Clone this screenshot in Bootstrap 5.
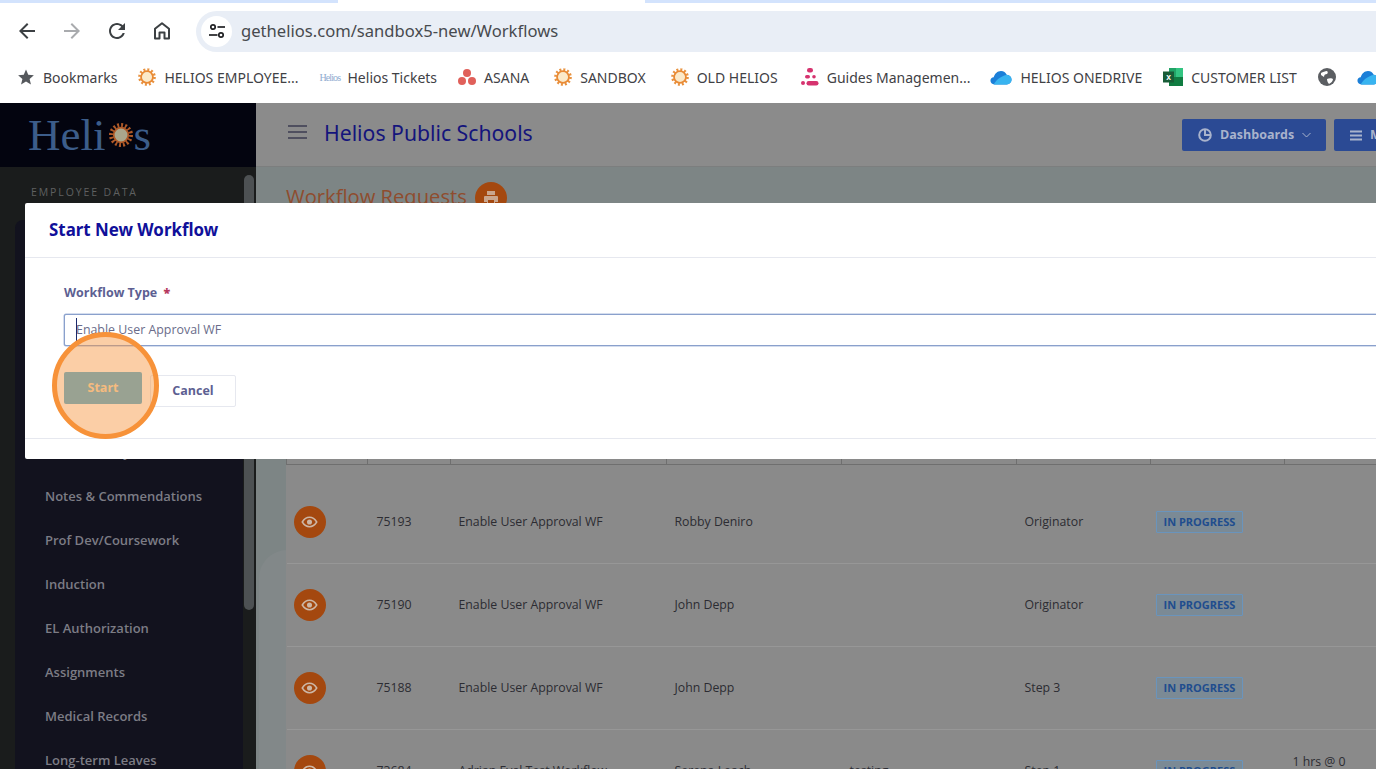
<!DOCTYPE html>
<html lang="en">
<head>
<meta charset="utf-8">
<title>Helios Workflows</title>
<link rel="stylesheet" href="https://cdn.jsdelivr.net/npm/bootstrap@5.3.0/dist/css/bootstrap.min.css">
<style>
html,body{height:769px;overflow:hidden;background:#fff;}
body{font-family:"Open Sans","Noto Sans",sans-serif;position:relative;width:1376px;}
/* browser chrome */
.tabstrip{height:3px;background:linear-gradient(90deg,#d3e3fd 0,#d3e3fd 338px,#fff 338px,#fff 645px,#d3e3fd 645px);}
.toolrow{height:56px;padding-left:15px;}
.toolbtn{width:24px;height:24px;margin-right:21px;flex:none;}
.urlbar{margin-left:1px;flex:1;height:41px;background:#e9eef6;border-radius:21px 0 0 21px;padding-left:5px;}
.urlpill{width:31px;height:31px;background:#fff;border-radius:50%;flex:none;}
.urltext{font-family:"Noto Sans",sans-serif;font-size:16.6px;color:#474a4e;margin-left:9px;}
.bookrow{height:36px;margin-bottom:8px;padding-left:17px;font-family:"Noto Sans",sans-serif;font-size:14px;color:#3f4145;white-space:nowrap;overflow:hidden;}
.bookitem{display:flex;align-items:center;gap:8px;margin-right:21px;flex:none;}
.bookitem.gapsm{margin-right:20px;}
.bookitem.gapmd{margin-right:23px;}
.bookitem.gaplg{margin-right:25px;}
.heltick{font-family:"Liberation Serif",serif;font-size:10px;color:#8fabd0;width:20px;letter-spacing:-.9px;}
/* app shell */
.appshell{height:666px;overflow:hidden;}
.sidecol{width:256px;flex:none;background:#1a1c1c;}
.sidelogo{height:64px;background:#03040f;padding-left:28px;font-family:"Liberation Serif",serif;font-size:45px;color:#3c5d8a;line-height:1;}
.logosun{margin-left:4px;flex:none;}
.sidebody{height:602px;overflow:hidden;}
.sidemain{width:244px;flex:none;}
.sidelabel{font-size:10.5px;letter-spacing:1.9px;color:#5f6060;padding:18px 0 0 31px;height:53px;}
.sidepanel{margin-left:15px;width:228px;height:560px;background:#12121e;border-radius:8px 0 0 0;padding:210px 0 0 30px;}
.sideitem{height:44px;line-height:44px;font-size:13px;font-weight:600;color:#7c7c85;white-space:nowrap;}
.sidethumb{width:10px;height:435px;margin-top:8px;background:#4d5153;border-radius:5px;}
.mainwrap{flex:1;min-width:0;background:#7d8585;overflow:hidden;position:relative;}
.mainwrap::before{content:"";position:absolute;left:3px;top:447px;width:40px;height:300px;background:#828889;border-radius:28px 0 0 0;}
.topbar{height:64px;background:#8b8b8b;border-bottom:1px solid #7c7e7e;padding-left:32px;position:relative;}
.topstart{flex:0 0 894px;}
.appname{font-family:"Noto Sans",sans-serif;font-size:21.2px;color:#14147c;margin:0 0 4px 17px;}
.dashbtn{height:32px;background:#2b4a94;color:#a9b3cc;font-size:12.5px;font-weight:700;border-radius:2px;flex:none;white-space:nowrap;padding:1px 0 0 16px;}
.dashone{width:144px;}
.dashtwo{width:80px;}
.titleband{height:291px;padding:14px 0 0 30px;position:relative;}
.pagetitle{font-size:20.2px;color:#8f4c2e;margin:0 0 3px;line-height:30px;}
.printdot{width:32px;height:32px;border-radius:50%;background:#a4480f;margin-left:8px;}
.gridwrap{margin-left:30px;background:#8a8a8a;width:1200px;position:relative;}
.flowtable{table-layout:fixed;width:1200px;margin:0;--bs-table-bg:transparent;--bs-table-color:#2c2c32;font-size:12.3px;}
.flowtable th{height:6px;padding:0;border-left:1px solid #6f6f6f;border-bottom:1px solid #6f6f6f;}
.flowtable .gaprow td{height:16px;padding:0;border:0;}
.flowtable tbody tr.flowrow td{height:83px;padding:2px 0 0 8px;vertical-align:middle;border-bottom:1px solid #979797;}
.flowtable tbody tr.flowrow td:nth-child(1){padding-left:7px;padding-top:1px;}
.flowtable tbody tr.flowrow td:nth-child(2){padding-left:9px;}
.flowtable tbody tr.flowrow td:nth-child(7){padding-left:5px;padding-top:1px;}
.cola{width:81px;}.colb{width:83px;}.colc{width:216px;}.cold{width:175px;}.cole{width:175px;}.colf{width:134px;}.colg{width:134px;}
.eyedot{width:32px;height:32px;border-radius:50%;background:#a4480f;}
.flowbadge{display:inline-block;height:22px;line-height:20px;padding:0 7px;background:#7b8a95;border:1px solid #6a94bc;border-radius:1px;color:#1f4d8e;font-size:11px;font-weight:700;white-space:nowrap;}
/* modal */
.startmodal{position:absolute;left:25px;top:203px;width:1500px;}
.startmodal .modal-content{border:0;border-radius:2px;height:256px;background:#fff;}
.startmodal .modal-header{height:55px;padding:0 24px;border-bottom:1px solid #e6e8ef;border-radius:0;display:flex;align-items:center;}
.startmodal .modal-title{font-size:16.9px;font-weight:700;color:#10109a;font-family:"Noto Sans",sans-serif;margin:0;}
.startmodal .modal-body{height:181px;flex:none;padding:25px 39px 0;border-bottom:1px solid #e6e8ef;}
.fieldname{font-size:12.5px;font-weight:700;color:#5d5f92;margin:0 0 11px;line-height:20px;display:block;}
.fieldname b{color:#b5375d;margin-left:3px;}
.startfield{height:32px;border:1px solid #8aa0cc;border-radius:2px;padding:0 11px 1px;font-size:12.4px;color:#6a6c8a;font-family:"Open Sans",sans-serif;box-shadow:0 0 0 .5px #a9bbdd;}
.startfield:focus{box-shadow:0 0 0 .5px #a9bbdd;border-color:#8aa0cc;}
.fieldwrap{position:relative;}
.caretbar{position:absolute;left:12px;top:4px;width:1px;height:24px;background:#1a2a6c;}
.startbtn{width:78px;height:32px;margin-top:26px;background:#4eafda;border:0;border-radius:2px;color:#f4ddb8;font-size:12.5px;font-weight:700;padding:0;}
.startbtn:disabled{background:#4eafda;color:#f4ddb8;opacity:1;}
.cancelbtn{width:86px;height:32px;margin-top:29px;margin-left:8px;background:#fff;border:1px solid #e6e8ef;border-radius:2px;color:#5d5f92;font-size:12.5px;font-weight:700;padding:0;}
.clickmark{position:absolute;left:52px;top:332px;width:107px;height:107px;border-radius:50%;border:5px solid #f79239;background:rgba(247,146,57,.45);}
</style>
</head>
<body>
<svg width="0" height="0" class="position-absolute">
  <defs>
    <symbol id="sunfav" viewBox="0 0 20 20">
      <circle cx="10" cy="10" r="8" fill="none" stroke="#e8923f" stroke-width="3.6" stroke-dasharray="2.1 2.1"/>
      <circle cx="10" cy="10" r="6.6" fill="#fbe9c9" stroke="#e98a35" stroke-width="2"/>
    </symbol>
    <symbol id="cloudfav" viewBox="0 0 24 16">
      <path d="M5 15.5C2 15.5.5 13.500.5 11.500S2 8 4 7.800C5 4 8 .8 12 .8c3 0 5.200 1.700 6.200 4.200 3.200.2 5.300 2.700 5.300 5.300 0 3-2.300 5.200-5.300 5.200z" fill="#1b7fd8"/>
      <path d="M4 15.500c3-5 7-8.500 14.200-10.500 3.200.2 5.300 2.700 5.300 5.300 0 3-2.300 5.200-5.300 5.200z" fill="#38b4f0"/>
    </symbol>
    <symbol id="eyeicon" viewBox="0 0 20 14">
      <path d="M1.500 7C4 3 7 1.500 10 1.500S16 3 18.500 7C16 11 13 12.500 10 12.500S4 11 1.500 7z" fill="none" stroke="#cdb7a6" stroke-width="1.800"/>
      <circle cx="10" cy="7" r="3" fill="#cdb7a6"/>
    </symbol>
  </defs>
</svg>

<div class="tabstrip"></div>
<div class="toolrow d-flex align-items-center">
  <svg class="toolbtn" viewBox="0 0 24 24"><path fill="#3c4043" d="M20 11H7.830l5.590-5.590L12 4l-8 8 8 8 1.410-1.410L7.830 13H20v-2z"/></svg>
  <svg class="toolbtn" viewBox="0 0 24 24"><path fill="#a9abae" d="M4 11h12.170l-5.590-5.590L12 4l8 8-8 8-1.410-1.410L16.170 13H4v-2z"/></svg>
  <svg class="toolbtn" viewBox="0 0 24 24"><path fill="#3c4043" d="M17.650 6.350C16.200 4.900 14.210 4 12 4c-4.420 0-7.990 3.580-7.990 8s3.570 8 7.990 8c3.730 0 6.840-2.550 7.730-6h-2.080c-.82 2.330-3.040 4-5.650 4-3.310 0-6-2.690-6-6s2.690-6 6-6c1.660 0 3.140.69 4.220 1.780L13 11h7V4l-2.350 2.350z"/></svg>
  <svg class="toolbtn" viewBox="0 0 24 24"><path fill="none" stroke="#3c4043" stroke-width="2" stroke-linejoin="round" d="M5 19.500V9.800L12 4.300l7 5.500v9.700h-4.500v-6h-5v6z"/></svg>
  <div class="urlbar d-flex align-items-center">
    <div class="urlpill d-flex align-items-center justify-content-center">
      <svg width="18" height="18" viewBox="0 0 18 18"><g fill="none" stroke="#202124" stroke-width="1.700"><circle cx="5" cy="5" r="2.200"/><path d="M9.500 5H17"/><circle cx="13" cy="13" r="2.200"/><path d="M1 13h8.500"/></g></svg>
    </div>
    <span class="urltext">gethelios.com/sandbox5-new/Workflows</span>
  </div>
</div>
<div class="bookrow d-flex align-items-center">
  <span class="bookitem"><svg width="18" height="18" viewBox="0 0 24 24"><path fill="#55585c" d="M12 2l3 7 7.500.7-5.700 5 1.800 7.300L12 18l-6.600 4 1.800-7.300-5.700-5L9 9z"/></svg>Bookmarks</span>
  <span class="bookitem"><svg width="18" height="18"><use href="#sunfav"/></svg>HELIOS EMPLOYEE...</span>
  <span class="bookitem"><span class="heltick">Helios</span>Helios Tickets</span>
  <span class="bookitem gaplg"><svg width="18" height="18" viewBox="0 0 18 18"><g fill="#e0605a"><circle cx="9" cy="5" r="4"/><circle cx="4" cy="13" r="4"/><circle cx="14" cy="13" r="4"/></g></svg>ASANA</span>
  <span class="bookitem gaplg"><svg width="18" height="18"><use href="#sunfav"/></svg>SANDBOX</span>
  <span class="bookitem gapmd"><svg width="18" height="18"><use href="#sunfav"/></svg>OLD HELIOS</span>
  <span class="bookitem gapsm"><svg width="18" height="20" viewBox="0 0 18 20"><g fill="#d6336f"><rect x="6" y="1" width="6" height="4.500" rx="2.200"/><rect x="4" y="8" width="5" height="3.500" rx="1.700"/><circle cx="13" cy="9.800" r="1.800"/><circle cx="2" cy="16" r="2"/><rect x="5.500" y="14" width="12" height="4.500" rx="2.200"/></g></svg>Guides Managemen...</span>
  <span class="bookitem"><svg width="22" height="15"><use href="#cloudfav"/></svg>HELIOS ONEDRIVE</span>
  <span class="bookitem"><svg width="20" height="20" viewBox="0 0 20 20"><rect x="6" y="1" width="14" height="18" fill="#21a366"/><rect x="13" y="1" width="7" height="9" fill="#33c481"/><rect x="6" y="10" width="14" height="9" fill="#107c41"/><rect x="0" y="4.500" width="11" height="11" fill="#185c37"/><text x="5.500" y="13" font-size="8.500" font-weight="700" fill="#fff" text-anchor="middle" font-family="Liberation Sans">x</text></svg>CUSTOMER LIST</span>
  <span class="bookitem"><svg width="18" height="18" viewBox="0 0 18 18"><circle cx="9" cy="9" r="9" fill="#5b5e62"/><path fill="#fff" d="M3 5c2-1 4-2 6-2 1 1 1 2 0 3-2 0-3 1-3 3L3 7zM9 11c2-1 5-1 6 0 0 2-2 4-4 5-1-1-2-3-2-5z"/></svg></span>
  <span class="bookitem"><svg width="22" height="15"><use href="#cloudfav"/></svg></span>
</div>

<div class="appshell d-flex">
  <aside class="sidecol">
    <div class="sidelogo d-flex align-items-center">Heli<svg width="24" height="24" viewBox="0 0 28 28" class="logosun"><circle cx="14" cy="14" r="11.500" fill="none" stroke="#b05a28" stroke-width="5" stroke-dasharray="2.200 2.300"/><circle cx="14" cy="14" r="8.500" fill="#aaa78c" stroke="#b05a28" stroke-width="2"/></svg>s</div>
    <div class="sidebody d-flex">
      <div class="sidemain">
        <div class="sidelabel">EMPLOYEE DATA</div>
        <div class="sidepanel">
          <div class="sideitem">Leave History</div>
          <div class="sideitem">Notes &amp; Commendations</div>
          <div class="sideitem">Prof Dev/Coursework</div>
          <div class="sideitem">Induction</div>
          <div class="sideitem">EL Authorization</div>
          <div class="sideitem">Assignments</div>
          <div class="sideitem">Medical Records</div>
          <div class="sideitem">Long-term Leaves</div>
        </div>
      </div>
      <div class="sidethumb"></div>
    </div>
  </aside>
  <main class="mainwrap">
    <div class="topbar d-flex align-items-center">
      <div class="topstart d-flex align-items-center">
        <svg width="19" height="14" viewBox="0 0 19 14" class="mb-1"><path d="M0 1h19M0 7h19M0 13h19" stroke="#3d3d52" stroke-width="1.700"/></svg>
        <span class="appname">Helios Public Schools</span>
      </div>
      <div class="d-flex gap-2">
        <div class="dashbtn dashone d-flex align-items-center">
          <svg width="14" height="14" viewBox="0 0 14 14" class="me-2"><g fill="none" stroke="#a9b3cc" stroke-width="2"><circle cx="7" cy="7" r="5.800"/><path d="M7 1.200V7h5.800"/></g></svg>Dashboards
          <svg width="9" height="6" viewBox="0 0 9 6" class="ms-2"><path d="M.5 1l4 4 4-4" fill="none" stroke="#a9b3cc"/></svg>
        </div>
        <div class="dashbtn dashtwo d-flex align-items-center">
          <svg width="12" height="11" viewBox="0 0 12 11" class="me-2"><path d="M0 1.500h12M0 5.500h12M0 9.500h12" stroke="#a9b3cc" stroke-width="2"/></svg>Menu
        </div>
      </div>
    </div>
    <div class="titleband">
      <div class="d-flex align-items-center">
        <h1 class="pagetitle">Workflow Requests</h1>
        <span class="printdot d-flex align-items-center justify-content-center"><svg width="16" height="16" viewBox="0 0 16 16"><path fill="#c9a68e" d="M4 1h8v4H4zM2 6h12a1 1 0 0 1 1 1v5h-3v3H4v-3H1V7a1 1 0 0 1 1-1zm3 4v4h6v-4z"/></svg></span>
      </div>
    </div>
    <div class="gridwrap">
      <table class="table flowtable">
        <colgroup><col class="cola"><col class="colb"><col class="colc"><col class="cold"><col class="cole"><col class="colf"><col class="colg"><col></colgroup>
        <thead><tr><th></th><th></th><th></th><th></th><th></th><th></th><th></th><th></th></tr></thead>
        <tbody>
          <tr class="gaprow"><td colspan="8"></td></tr>
          <tr class="flowrow"><td><span class="eyedot d-flex align-items-center justify-content-center"><svg width="17" height="12"><use href="#eyeicon"/></svg></span></td><td>75193</td><td>Enable User Approval WF</td><td>Robby Deniro</td><td></td><td>Originator</td><td><span class="flowbadge">IN PROGRESS</span></td><td></td></tr>
          <tr class="flowrow"><td><span class="eyedot d-flex align-items-center justify-content-center"><svg width="17" height="12"><use href="#eyeicon"/></svg></span></td><td>75190</td><td>Enable User Approval WF</td><td>John Depp</td><td></td><td>Originator</td><td><span class="flowbadge">IN PROGRESS</span></td><td></td></tr>
          <tr class="flowrow"><td><span class="eyedot d-flex align-items-center justify-content-center"><svg width="17" height="12"><use href="#eyeicon"/></svg></span></td><td>75188</td><td>Enable User Approval WF</td><td>John Depp</td><td></td><td>Step 3</td><td><span class="flowbadge">IN PROGRESS</span></td><td></td></tr>
          <tr class="flowrow"><td><span class="eyedot d-flex align-items-center justify-content-center"><svg width="17" height="12"><use href="#eyeicon"/></svg></span></td><td>73684</td><td>Adrian Eval Test Workflow</td><td>Serena Leach</td><td>testing</td><td>Step 1</td><td><span class="flowbadge">IN PROGRESS</span></td><td>1 hrs @ 0<br>&nbsp;</td></tr>
        </tbody>
      </table>
    </div>
  </main>
</div>

<div class="startmodal">
  <div class="modal-content">
    <div class="modal-header"><h5 class="modal-title">Start New Workflow</h5></div>
    <div class="modal-body">
      <label class="fieldname" for="wftype">Workflow Type <b>*</b></label>
      <div class="fieldwrap">
        <input id="wftype" class="form-control startfield" type="text" value="Enable User Approval WF" readonly>
        <span class="caretbar"></span>
      </div>
      <div class="d-flex align-items-start">
        <button type="button" class="btn startbtn" disabled>Start</button>
        <button type="button" class="btn cancelbtn">Cancel</button>
      </div>
    </div>
  </div>
</div>
<div class="clickmark"></div>
</body>
</html>
